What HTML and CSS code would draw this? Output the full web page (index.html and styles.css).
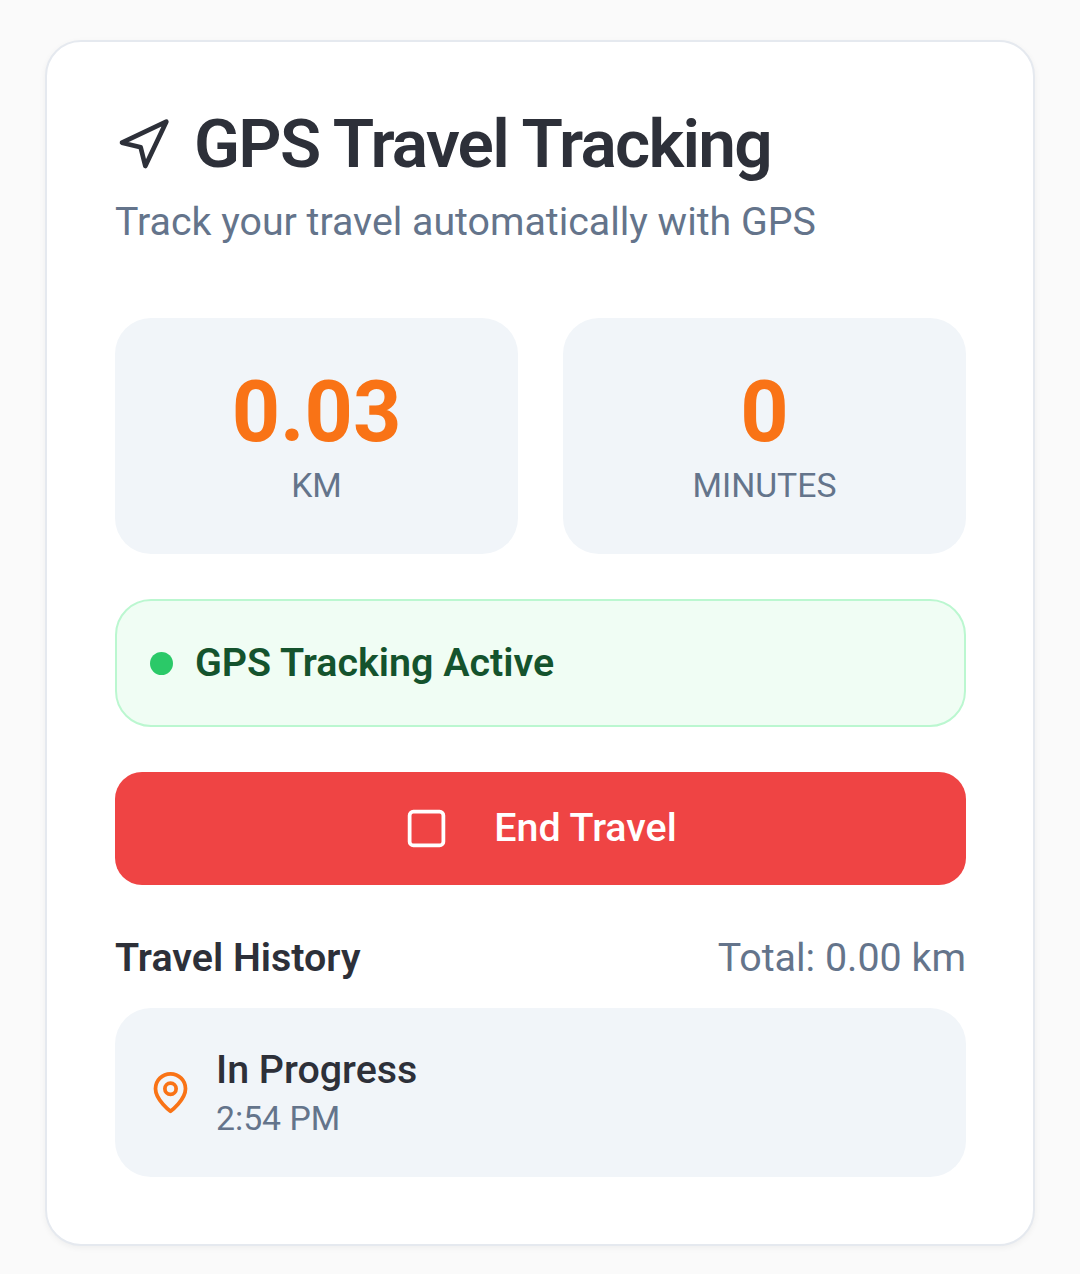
FILE: index.html
```html
<!DOCTYPE html>
<html lang="en">
<head>
    <meta charset="UTF-8">
    <meta name="viewport" content="width=device-width, initial-scale=1.0">
    <title>GPS Travel Tracking</title>
    <link rel="stylesheet" href="styles.css">
</head>
<body>
    <div class="card">
        <div class="title-row">
            <svg class="title-icon" viewBox="0 0 24 24" fill="none" stroke="currentColor" stroke-width="2" stroke-linecap="round" stroke-linejoin="round">
                <polygon points="3 11 22 2 13 21 11 13 3 11"></polygon>
            </svg>
            <h1 class="title">GPS Travel Tracking</h1>
        </div>
        <p class="subtitle">Track your travel automatically with GPS</p>

        <div class="stats">
            <div class="stat">
                <div class="stat-value">0.03</div>
                <div class="stat-label">KM</div>
            </div>
            <div class="stat">
                <div class="stat-value">0</div>
                <div class="stat-label">MINUTES</div>
            </div>
        </div>

        <div class="status">
            <span class="status-dot"></span>
            <span class="status-text">GPS Tracking Active</span>
        </div>

        <button class="end-btn">
            <svg class="end-icon" viewBox="0 0 24 24" fill="none" stroke="currentColor" stroke-width="2" stroke-linecap="round" stroke-linejoin="round">
                <rect x="3" y="3" width="18" height="18" rx="2"></rect>
            </svg>
            <span class="end-text">End Travel</span>
        </button>

        <div class="history-header">
            <span class="history-title">Travel History</span>
            <span class="history-total">Total: 0.00 km</span>
        </div>

        <div class="history-item">
            <svg class="pin-icon" viewBox="0 0 24 24" fill="none" stroke="currentColor" stroke-width="2" stroke-linecap="round" stroke-linejoin="round">
                <path d="M20 10c0 6-8 12-8 12s-8-6-8-12a8 8 0 0 1 16 0Z"></path>
                <circle cx="12" cy="10" r="3"></circle>
            </svg>
            <div class="item-text">
                <div class="item-name">In Progress</div>
                <div class="item-time">2:54 PM</div>
            </div>
        </div>
    </div>
</body>
</html>
```

FILE: styles.css
```css
* {
    box-sizing: border-box;
}
body {
    margin: 0;
    padding: 40px 45px 28px;
    font-family: Roboto, "Liberation Sans", sans-serif;
    color: #2d3039;
    background: #fafafa;
}
.card {
    height: 1206px;
    padding: 68px 67px 0 68px;
    background: #fff;
    border: 2px solid #e5e9ef;
    border-radius: 36px;
    box-shadow: 0 2px 6px rgba(0,0,0,0.05);
}
.title-row {
    display: flex;
    align-items: center;
    gap: 23px;
}
.title-icon {
    width: 56px;
    height: 56px;
    flex-shrink: 0;
}
.title {
    margin: 0 0 3px;
    font-size: 67.5px;
    line-height: 67px;
    font-weight: 600;
    letter-spacing: -1.69px;
}
.subtitle {
    margin: 16px 0 0;
    font-size: 39.3px;
    line-height: 52px;
    color: #64748b;
}
.stats {
    display: grid;
    grid-template-columns: 1fr 1fr;
    gap: 45px;
    margin-top: 70px;
}
.stat {
    height: 236px;
    padding-top: 47px;
    text-align: center;
    background: #f1f5f9;
    border-radius: 36px;
}
.stat-value {
    font-size: 84.4px;
    line-height: 95px;
    font-weight: 700;
    color: #f97316;
}
.stat-label {
    margin-top: 2px;
    font-size: 33.75px;
    line-height: 47px;
    color: #64748b;
}
.status {
    display: flex;
    align-items: center;
    gap: 22px;
    height: 128px;
    margin-top: 45px;
    padding-left: 33px;
    background: #f0fdf4;
    border: 2px solid #bbf7d0;
    border-radius: 36px;
}
.status-dot {
    width: 23px;
    height: 23px;
    border-radius: 50%;
    background: #2bc968;
}
.status-text {
    padding-bottom: 2px;
    font-size: 39.4px;
    font-weight: 600;
    color: #14532d;
}
.end-btn {
    display: flex;
    align-items: center;
    justify-content: center;
    gap: 45px;
    width: 100%;
    height: 113px;
    margin-top: 45px;
    border: none;
    border-radius: 27px;
    background: #ef4444;
    color: #fff;
    font-family: inherit;
    font-size: 39.4px;
    font-weight: 500;
}
.end-icon {
    width: 45px;
    height: 45px;
}
.end-text {
    padding-bottom: 2px;
}
.history-header {
    display: flex;
    justify-content: space-between;
    align-items: center;
    height: 52px;
    margin-top: 46px;
    font-size: 39.4px;
}
.history-title {
    font-weight: 600;
}
.history-total {
    color: #64748b;
}
.history-item {
    display: flex;
    align-items: center;
    gap: 23px;
    height: 169px;
    margin-top: 25px;
    padding-left: 33px;
    background: #f1f5f9;
    border-radius: 36px;
}
.pin-icon {
    width: 45px;
    height: 45px;
    color: #f97316;
    flex-shrink: 0;
}
.item-name {
    font-size: 39.4px;
    line-height: 52px;
    font-weight: 500;
}
.item-time {
    font-size: 33.75px;
    line-height: 46px;
    color: #64748b;
}
```
